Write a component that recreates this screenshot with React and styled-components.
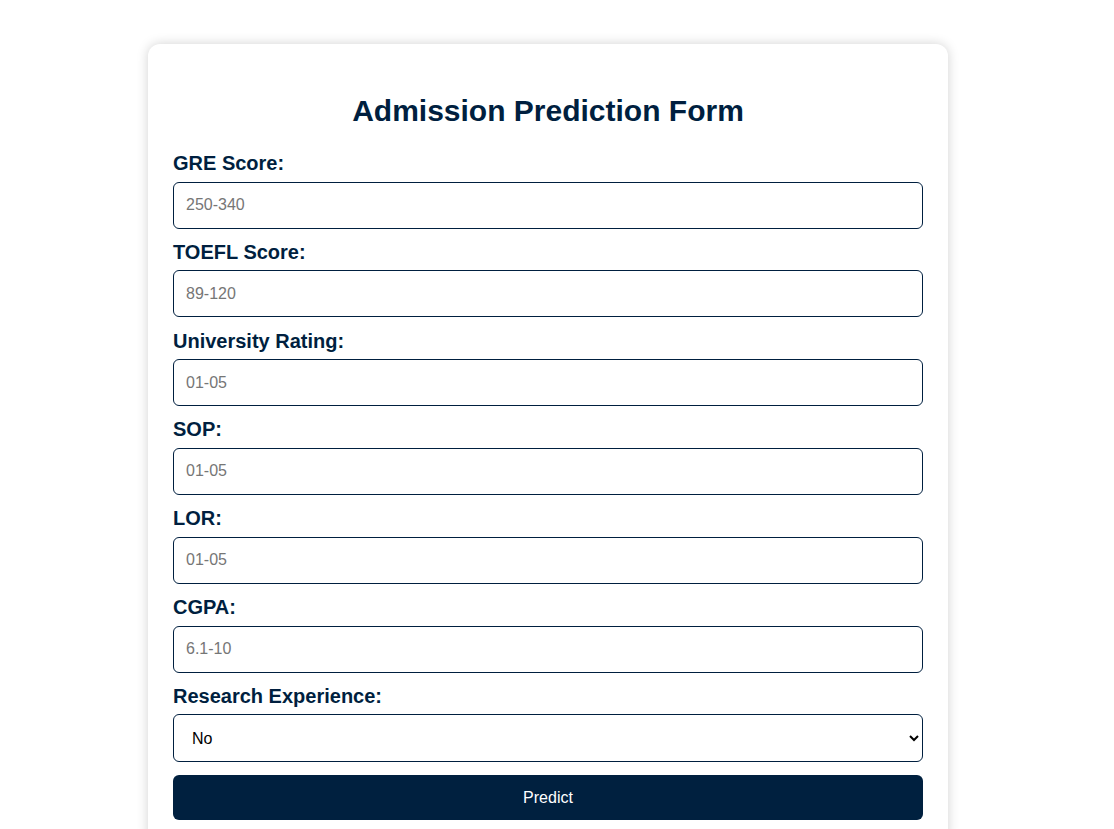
import React, { useState } from "react";
import styled, { createGlobalStyle } from "styled-components";

const GlobalStyle = createGlobalStyle`
  * {
    box-sizing: border-box;
  }
  body {
    margin: 0;
    background: #ffffff;
    font-family: "Liberation Sans", Arial, sans-serif;
  }
`;

const Page = styled.div`
  display: flex;
  justify-content: center;
  padding: 44px 18px 0 0;
`;

const Card = styled.div`
  width: 800px;
  background: #ffffff;
  border-radius: 12px;
  box-shadow: 0 0 12px rgba(0, 0, 0, 0.18);
  padding: 50px 25px 25px;
`;

const Heading = styled.h2`
  margin: 0 0 24px;
  text-align: center;
  font-size: 30px;
  font-weight: bold;
  color: #001f3f;
`;

const Form = styled.form`
  display: flex;
  flex-direction: column;
`;

const Label = styled.label`
  display: block;
  font-size: 20px;
  line-height: 23.6px;
  font-weight: bold;
  color: #001f3f;
  margin-bottom: 6px;
`;

const Input = styled.input`
  display: block;
  width: 100%;
  height: 47px;
  padding: 0 12px;
  margin-bottom: 12.2px;
  font-family: "Liberation Sans", Arial, sans-serif;
  font-size: 16px;
  color: #000;
  border: 1px solid #001f3f;
  border-radius: 6px;
  outline: none;
  &::placeholder {
    color: #767676;
  }
`;

const Select = styled.select`
  display: block;
  width: 100%;
  height: 48px;
  padding: 0 12px 0 14px;
  margin-bottom: 13px;
  font-family: "Liberation Sans", Arial, sans-serif;
  font-size: 16px;
  color: #000;
  background: #fff;
  border: 1px solid #001f3f;
  border-radius: 6px;
  outline: none;
`;

const Button = styled.button`
  width: 100%;
  height: 45px;
  border: none;
  border-radius: 6px;
  background: #00203f;
  color: #ffffff;
  font-family: "Liberation Sans", Arial, sans-serif;
  font-size: 16px;
  line-height: 43px;
  padding: 0;
  cursor: pointer;
`;

const fields = [
  { name: "gre", label: "GRE Score:", placeholder: "250-340" },
  { name: "toefl", label: "TOEFL Score:", placeholder: "89-120" },
  { name: "rating", label: "University Rating:", placeholder: "01-05" },
  { name: "sop", label: "SOP:", placeholder: "01-05" },
  { name: "lor", label: "LOR:", placeholder: "01-05" },
  { name: "cgpa", label: "CGPA:", placeholder: "6.1-10" },
];

const App = () => {
  const [research, setResearch] = useState("0");
  const onSubmit = (e) => e.preventDefault();
  return (
    <>
      <GlobalStyle />
      <Page>
        <Card>
          <Heading>Admission Prediction Form</Heading>
          <Form onSubmit={onSubmit}>
            {fields.map((f) => (
              <React.Fragment key={f.name}>
                <Label htmlFor={f.name}>{f.label}</Label>
                <Input id={f.name} name={f.name} type="text" placeholder={f.placeholder} />
              </React.Fragment>
            ))}
            <Label htmlFor="research">Research Experience:</Label>
            <Select
              id="research"
              name="research"
              value={research}
              onChange={(e) => setResearch(e.target.value)}
            >
              <option value="0">No</option>
              <option value="1">Yes</option>
            </Select>
            <Button type="submit">Predict</Button>
          </Form>
        </Card>
      </Page>
    </>
  );
};

export default App;
